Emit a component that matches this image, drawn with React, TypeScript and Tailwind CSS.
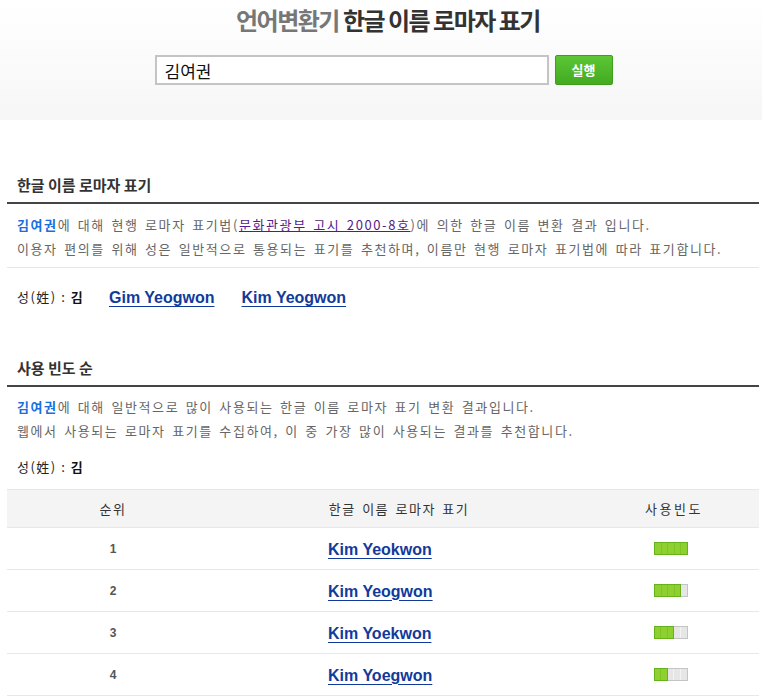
import React from 'react'

const KR = { fontFamily: '"Noto Sans CJK KR", "Noto Sans", sans-serif' }

const rows = [
  { rank: 1, name: 'Kim Yeokwon', level: 5 },
  { rank: 2, name: 'Kim Yeogwon', level: 4 },
  { rank: 3, name: 'Kim Yoekwon', level: 3 },
  { rank: 4, name: 'Kim Yoegwon', level: 2 },
]

function FreqBar({ level }: { level: number }) {
  const seg = 6.8
  return (
    <div className="flex h-[13px]">
      {level > 0 && (
        <div
          className="flex h-full border border-[#66b21b] bg-[#8fd031]"
          style={{ width: `${level * seg}px` }}
        >
          {Array.from({ length: level }).map((_, i) => (
            <span key={i} className="h-full flex-1 border-r border-[#7fc425] last:border-r-0" />
          ))}
        </div>
      )}
      {level < 5 && (
        <div
          className="flex h-full border border-l-0 border-[#c4c4c4] bg-[#e6e6e6]"
          style={{ width: `${(5 - level) * seg}px` }}
        >
          {Array.from({ length: 5 - level }).map((_, i) => (
            <span key={i} className="h-full flex-1 border-r border-[#f3f3f3] last:border-r-0" />
          ))}
        </div>
      )}
    </div>
  )
}

function NameLink({ children }: { children: React.ReactNode }) {
  return (
    <a
      href="#"
      className="font-bold text-[16px] text-[#123a9b] underline decoration-1 underline-offset-[3px]"
      style={{ fontFamily: '"Liberation Sans", Arial, sans-serif' }}
    >
      {children}
    </a>
  )
}

function SectionTitle({ children }: { children: React.ReactNode }) {
  return (
    <h2 className="h-[34px] pl-[10px] text-[15px] font-bold leading-[30px] text-[#333] border-b-2 border-[#444]">
      {children}
    </h2>
  )
}

export default function App() {
  return (
    <div className="min-h-[700px] bg-white" style={KR}>
      {/* header */}
      <div className="h-[120px] bg-gradient-to-b from-white to-[#f6f6f6] pt-[6px]">
        <h1 className="pl-[14px] text-center text-[24px] font-bold leading-[28px] tracking-[-1.5px]">
          <span className="text-[#777]">언어변환기</span>{' '}
          <span className="text-[#333]">한글 이름 로마자 표기</span>
        </h1>
        <div className="mt-[21px] flex justify-center pl-[5px]">
          <input
            defaultValue="김여권"
            className="h-[30px] w-[394px] border-2 border-[#c4c4c4] bg-white px-[8px] text-[17px] text-[#111] outline-none"
          />
          <button className="ml-[6px] h-[30px] w-[58px] rounded-[2px] border border-[#3c9f1c] bg-gradient-to-b from-[#5cc634] to-[#43aa22] text-[13px] font-bold text-white">
            실행
          </button>
        </div>
      </div>

      <div className="ml-[7px] mr-[3px]">
        {/* section 1 */}
        <div className="mt-[50px]">
          <SectionTitle>한글 이름 로마자 표기</SectionTitle>
          <div className="border-b border-[#e6e6e6] pb-[6px] pl-[10px] pt-[9px] text-[13px] leading-[24px] tracking-[1.6px] text-[#666] [word-spacing:2px]">
            <p>
              <span className="font-bold text-[#1a6fe0]">김여권</span>에 대해 현행 로마자 표기법(
              <a href="#" className="text-[#551a8b] underline">문화관광부 고시 2000-8호</a>)에 의한 한글 이름 변환 결과 입니다.
            </p>
            <p>이용자 편의를 위해 성은 일반적으로 통용되는 표기를 추천하며, 이름만 현행 로마자 표기법에 따라 표기합니다.</p>
          </div>
          <div className="flex items-center pl-[10px] pt-[16px] leading-[24px]">
            <span className="w-[92px] text-[13px] tracking-[1.5px] text-[#222]">
              성(姓) : <span className="font-bold text-[#111]">김</span>
            </span>
            <span>
              <NameLink>Gim Yeogwon</NameLink>
            </span>
            <span className="ml-[27px]">
              <NameLink>Kim Yeogwon</NameLink>
            </span>
          </div>
        </div>

        {/* section 2 */}
        <div className="mt-[43px]">
          <SectionTitle>사용 빈도 순</SectionTitle>
          <div className="pl-[10px] pt-[8px] text-[13px] leading-[24px] tracking-[1.6px] text-[#666] [word-spacing:2px]">
            <p>
              <span className="font-bold text-[#1a6fe0]">김여권</span>에 대해 일반적으로 많이 사용되는 한글 이름 로마자 표기 변환 결과입니다.
            </p>
            <p>웹에서 사용되는 로마자 표기를 수집하여, 이 중 가장 많이 사용되는 결과를 추천합니다.</p>
          </div>
          <p className="mt-[12px] pl-[10px] text-[13px] leading-[24px] tracking-[1.5px] text-[#222]">
            성(姓) : <span className="font-bold text-[#111]">김</span>
          </p>

          <div className="mt-[10px] border-t border-[#e8e8e8]">
            <div className="grid h-[38px] grid-cols-[212px_360px_1fr] items-center border-b border-[#e8e8e8] bg-[#f4f4f4] text-[13px] tracking-[1.5px] text-[#333] [word-spacing:2px]">
              <div className="text-center">순위</div>
              <div className="text-center">한글 이름 로마자 표기</div>
              <div className="pl-[10px] text-center tracking-[2.5px]">사용빈도</div>
            </div>
            {rows.map((r) => (
              <div
                key={r.rank}
                className="grid h-[42px] grid-cols-[212px_360px_1fr] items-center border-b border-[#e8e8e8]"
              >
                <div
                  className="text-center text-[12px] font-bold text-[#555]"
                  style={{ fontFamily: '"Liberation Sans", Arial, sans-serif' }}
                >
                  {r.rank}
                </div>
                <div className="pl-[109px]">
                  <NameLink>{r.name}</NameLink>
                </div>
                <div className="flex justify-center pl-[4px]">
                  <FreqBar level={r.level} />
                </div>
              </div>
            ))}
          </div>
        </div>
      </div>
    </div>
  )
}
